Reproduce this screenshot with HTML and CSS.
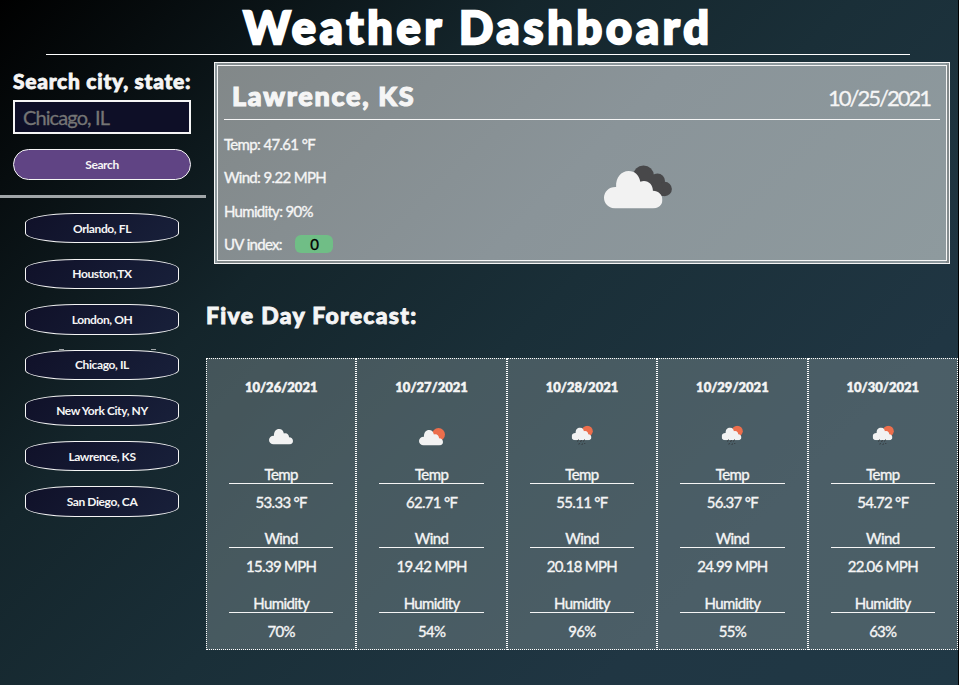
FILE: index.html
```html
<!DOCTYPE html>
<html lang="en">
<head>
<meta charset="utf-8">
<title>Weather Dashboard</title>
<link rel="stylesheet" href="styles.css">
</head>
<body>
<svg class="defs" aria-hidden="true">
  <defs>
    <symbol id="cloud" viewBox="0 0 58 37">
      <path d="M11 37C4.900 37 0 32.500 0 26.500S5 15.500 12 15.800C11.500 6.500 17 0 24.500 0c6 0 10 3.500 11.500 10.500C43 8 48.500 13 48.500 19.500 54 19.500 58 23.500 58 28.500S54 37 48.500 37Z"/>
    </symbol>
    <symbol id="rain" viewBox="0 0 22 20">
      <circle cx="15.800" cy="5.700" r="5.500" fill="#ec6e4c"/>
      <use href="#cloud" x="0" y="2" width="20" height="12.800" fill="#f2f2f2"/>
      <path d="M7 14l-1 2M10 14.500l-1 2M13 14l-1 2M8 17.500l-.7 1.500M11 18l-.7 1.500M13.500 17.500l-.5 1" stroke="#343a3e" stroke-width="1"/>
    </symbol>
  </defs>
</svg>
<header><h1>Weather Dashboard</h1></header>
<div class="layout">
  <aside>
    <form class="search">
      <label for="city">Search city, state:</label>
      <input id="city" type="text" placeholder="Chicago, IL">
      <button type="button">Search</button>
    </form>
    <nav class="history">
      <button>Orlando, FL</button>
      <button>Houston,TX</button>
      <button>London, OH</button>
      <button class="stacked">Chicago, IL</button>
      <button>New York City, NY</button>
      <button>Lawrence, KS</button>
      <button>San Diego, CA</button>
    </nav>
  </aside>
  <main>
    <section class="current">
      <div class="current-head"><h2>Lawrence, KS</h2><span class="date">10/25/2021</span></div>
      <div class="current-body">
        <div class="stats">
          <p>Temp: 47.61 °F</p>
          <p>Wind: 9.22 MPH</p>
          <p>Humidity: 90%</p>
          <p>UV index: <span class="uv">0</span></p>
        </div>
        <svg class="big-icon" viewBox="0 0 70 44">
          <g fill="#48484a">
            <circle cx="39.500" cy="11" r="10.500"/>
            <circle cx="53.500" cy="16" r="7.500"/>
            <circle cx="60.700" cy="24" r="7.200"/>
            <path d="M35 10l12-3 10 10 4 14H50L35 25Z"/>
          </g>
          <use href="#cloud" x="0" y="6" width="58.500" height="37.500" fill="#f2f2f2"/>
        </svg>
      </div>
    </section>
    <h3>Five Day Forecast:</h3>
    <section class="forecast">
      <article><h4>10/26/2021</h4><svg class="icon" viewBox="0 0 28 24"><use href="#cloud" x="2" y="6" width="24" height="15.500" fill="#f2f2f2"/></svg>
        <h5>Temp</h5><p>53.33 °F</p><h5>Wind</h5><p>15.39 MPH</p><h5>Humidity</h5><p>70%</p></article>
      <article><h4>10/27/2021</h4><svg class="icon" viewBox="0 0 28 24"><circle cx="20.500" cy="11.500" r="6.500" fill="#ec6e4c"/><use href="#cloud" x="1" y="7" width="24" height="15.500" fill="#f2f2f2"/></svg>
        <h5>Temp</h5><p>62.71 °F</p><h5>Wind</h5><p>19.42 MPH</p><h5>Humidity</h5><p>54%</p></article>
      <article><h4>10/28/2021</h4><svg class="icon" viewBox="0 0 28 24"><use href="#rain" x="3.500" y="2.500" width="22" height="20"/></svg>
        <h5>Temp</h5><p>55.11 °F</p><h5>Wind</h5><p>20.18 MPH</p><h5>Humidity</h5><p>96%</p></article>
      <article><h4>10/29/2021</h4><svg class="icon" viewBox="0 0 28 24"><use href="#rain" x="3.500" y="2.500" width="22" height="20"/></svg>
        <h5>Temp</h5><p>56.37 °F</p><h5>Wind</h5><p>24.99 MPH</p><h5>Humidity</h5><p>55%</p></article>
      <article><h4>10/30/2021</h4><svg class="icon" viewBox="0 0 28 24"><use href="#rain" x="3.500" y="2.500" width="22" height="20"/></svg>
        <h5>Temp</h5><p>54.72 °F</p><h5>Wind</h5><p>22.06 MPH</p><h5>Humidity</h5><p>63%</p></article>
    </section>
  </main>
</div>
</body>
</html>
```
FILE: styles.css
```css
* { box-sizing: border-box; }
html { background: #000; }
body {
  margin: 0;
  width: 958px;
  height: 685px;
  color: #f5f5f5;
  font-family: "Gill Sans", Lato, sans-serif;
  background: linear-gradient(135deg, #000, #14252b 32%, #1a2f38 52%, #203643 78%, #203845) no-repeat;
}
h1, h2, h3, h4, h5, p { margin: 0; }
.defs { position: absolute; width: 0; height: 0; }
header { height: 55px; margin: 0 48px 0 46px; border-bottom: 1px solid #fff; }
h1 {
  color: #fff; font-size: 45px; line-height: 54px; font-weight: 900; text-align: center;
  letter-spacing: 3.850px; -webkit-text-stroke: 2.300px #fff; white-space: nowrap;
}
.layout { display: flex; }
aside { width: 206px; flex: none; }
.search { height: 143px; padding: 12px 15px 0 13px; border-bottom: 3px solid #a0a5a8; }
label { display: block; height: 33px; line-height: 28px; font-size: 21px; font-weight: 900; letter-spacing: .720px; -webkit-text-stroke: .8px; white-space: nowrap; }
input {
  display: block; width: 178px; height: 34px; padding: 0 8px;
  border: 2px solid #f5f5f5; background: #0e0f27; color: #f5f5f5; font: 20px Lato, sans-serif; letter-spacing: -.900px;
}
input::placeholder { color: #757575; opacity: 1; -webkit-text-stroke: .3px; }
button { display: block; padding: 0; border: 1px solid #f5f5f5; color: #f5f5f5; font: bold 12px Lato, sans-serif; letter-spacing: -.400px; }
.search button { width: 178px; height: 31px; margin-top: 15px; border-radius: 16px; background: #604484; }
.history { display: flex; flex-direction: column; align-items: center; gap: 15.200px; padding: 15px 2px 0 0; }
.history button { position: relative; width: 154px; height: 30.400px; border-radius: 50px / 10px; background: linear-gradient(135deg, #101129, #18203a); }
.stacked::before {
  content: ""; position: absolute; top: -2px; left: 33px; width: 87px; height: 1px;
  border: solid #a0a5a8; border-width: 0 5px;
}
main { flex: 1; min-width: 0; }
.current { width: 736px; height: 202px; margin: 7px 0 0 8px; padding: 0 6px; border: 4px double #f5f5f5; background: linear-gradient(135deg, #828889, #8a9499 50%, #8e9a9e); }
.current-head { height: 54px; display: flex; align-items: center; justify-content: space-between; padding: 7px 8px 0; border-bottom: 1px solid #f5f5f5; }
h2 { font-size: 27px; line-height: 30px; padding-bottom: 1px; font-weight: 900; letter-spacing: 1.700px; -webkit-text-stroke: 1.200px; }
.date { padding: 3px 2px 0 0; font-size: 22px; letter-spacing: -2px; -webkit-text-stroke: .3px; }
.current-body { display: flex; }
.stats { width: 380px; padding-top: 8px; }
.stats p { height: 33.300px; line-height: 32px; font-size: 15px; letter-spacing: -.700px; word-spacing: .3px; -webkit-text-stroke: .350px; }
.uv { display: inline-block; width: 38px; height: 18px; margin-left: 10px; line-height: 18px; border-radius: 6px; text-align: center; color: #000; background: #70be86; }
.big-icon { width: 70px; height: 44px; margin-top: 45px; }
h3 { height: 94px; padding-top: 36px; line-height: 30px; font-size: 23px; font-weight: 900; letter-spacing: 1.300px; -webkit-text-stroke: .9px; }
.forecast { display: grid; grid-template-columns: repeat(5, 1fr); width: 752px; height: 292px; }
article { height: 292px; border: 1px dotted #fff; padding: 20px 22px 0; text-align: center; background: rgba(141, 155, 158, .4); }
h4 { font-size: 13px; line-height: 17px; margin-bottom: 27px; font-weight: 900; -webkit-text-stroke: .5px; }
.icon { display: block; width: 28px; height: 24px; margin: 0 auto 18px; }
h5 { height: 19px; line-height: 18px; border-bottom: 1px solid #f5f5f5; font-size: 15px; font-weight: 400; letter-spacing: -.600px; -webkit-text-stroke: .350px; }
article p { height: 45.400px; line-height: 36px; font-size: 15px; letter-spacing: -.700px; -webkit-text-stroke: .350px; white-space: nowrap; }
article p:last-child { height: 36px; }
```
